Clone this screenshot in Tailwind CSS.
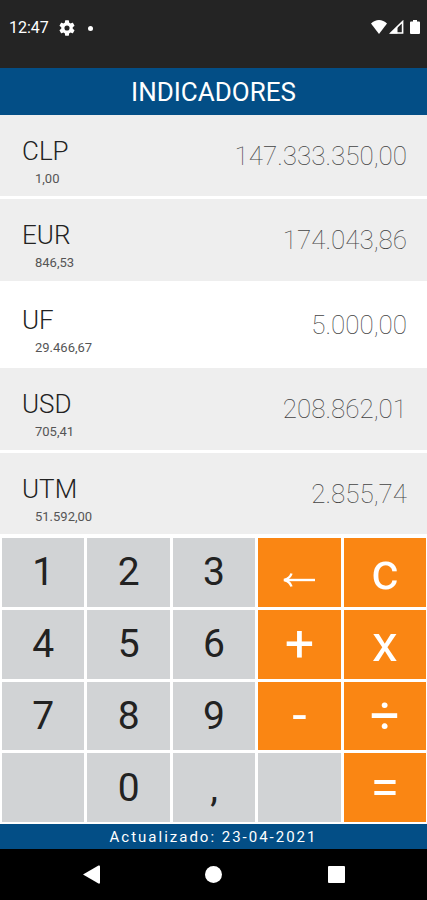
<!DOCTYPE html>
<html lang="es">
<head>
<meta charset="utf-8">
<meta name="viewport" content="width=device-width, initial-scale=1">
<title>Indicadores</title>
<script src="https://cdn.jsdelivr.net/npm/@tailwindcss/browser@4"></script>
</head>
<body class="flex h-dvh min-h-[720px] flex-col bg-white font-[Roboto,sans-serif] text-[#222]">
  <div class="flex h-[68px] shrink-0 items-start justify-between bg-[#242424] pt-[18px] pr-[7px] pl-[9px] text-white">
    <div class="flex h-5 items-center">
      <span class="text-base">12:47</span>
      <svg class="ml-[10px] size-4" viewBox="2 2 20 20" fill="currentColor" aria-hidden="true"><path d="M19.14 12.94c.04-.3.06-.61.06-.94s-.02-.64-.07-.94l2.03-1.58a.49.49 0 0 0 .12-.61l-1.92-3.32a.49.49 0 0 0-.59-.22l-2.39.96a7 7 0 0 0-1.62-.94l-.36-2.54a.48.48 0 0 0-.48-.41h-3.84a.48.48 0 0 0-.47.41l-.36 2.54c-.59.24-1.13.57-1.62.94l-2.39-.96a.48.48 0 0 0-.59.22L2.74 8.87a.48.48 0 0 0 .12.61l2.03 1.58c-.05.3-.09.63-.09.94s.02.64.07.94l-2.03 1.58a.49.49 0 0 0-.12.61l1.92 3.32c.12.22.37.29.59.22l2.39-.96c.5.38 1.03.7 1.62.94l.36 2.54c.05.24.24.41.48.41h3.84c.24 0 .44-.17.47-.41l.36-2.54a6.8 6.8 0 0 0 1.62-.94l2.39.96c.22.08.47 0 .59-.22l1.92-3.32a.47.47 0 0 0-.12-.61zM12 15.200a3.200 3.200 0 1 1 0-6.400 3.200 3.200 0 0 1 0 6.400z"/></svg>
      <span class="ml-[13px] size-[5px] rounded-full bg-white"></span>
    </div>
    <div class="flex h-[18px] items-center gap-[2px]">
      <svg class="h-[14px] w-4" viewBox="0 0 16 14" fill="currentColor" aria-hidden="true"><path d="M0 3.600C4.500-1.200 11.500-1.200 16 3.600L8 14z"/></svg>
      <svg class="h-[14px] w-[15px]" viewBox="0 0 15 14" aria-hidden="true"><path d="M1.800 13 13.600 1.600V13z" fill="none" stroke="#fff" stroke-width="1.600"/><path d="M1 13.600 8.500 6.300v7.300z" fill="#fff"/></svg>
      <svg class="ml-1 h-[14px] w-[10px]" viewBox="0 0 10 14" fill="currentColor" aria-hidden="true"><path d="M3 0h4v1.500h2q1 0 1 1V13q0 1-1 1H1q-1 0-1-1V2.500q0-1 1-1h2z"/></svg>
    </div>
  </div>

  <header class="flex h-[47px] shrink-0 items-center justify-center bg-[#034e86] text-white">
    <h1 class="text-[26px] leading-8">INDICADORES</h1>
  </header>

  <ul class="flex flex-[419_1_0%] flex-col gap-[3px] pb-[2px]">
    <li class="flex flex-1"><button class="flex flex-1 items-start justify-between bg-[#eee] pt-5 pr-5 pl-[22px] text-left">
      <span><span class="block text-[26px] leading-8 font-light">CLP</span><span class="block pl-[13px] text-[13px] leading-6 text-[#555]">1,00</span></span>
      <span class="pt-[5px] text-[26px] leading-8 font-thin text-[#444]">147.333.350,00</span></button></li>
    <li class="flex flex-1"><button class="flex flex-1 items-start justify-between bg-[#eee] pt-5 pr-5 pl-[22px] text-left">
      <span><span class="block text-[26px] leading-8 font-light">EUR</span><span class="block pl-[13px] text-[13px] leading-6 text-[#555]">846,53</span></span>
      <span class="pt-[5px] text-[26px] leading-8 font-thin text-[#444]">174.043,86</span></button></li>
    <li class="flex flex-1"><button aria-pressed="true" class="flex flex-1 items-start justify-between bg-white pt-5 pr-5 pl-[22px] text-left">
      <span><span class="block text-[26px] leading-8 font-light">UF</span><span class="block pl-[13px] text-[13px] leading-6 text-[#555]">29.466,67</span></span>
      <span class="pt-[5px] text-[26px] leading-8 font-thin text-[#444]">5.000,00</span></button></li>
    <li class="flex flex-1"><button class="flex flex-1 items-start justify-between bg-[#eee] pt-5 pr-5 pl-[22px] text-left">
      <span><span class="block text-[26px] leading-8 font-light">USD</span><span class="block pl-[13px] text-[13px] leading-6 text-[#555]">705,41</span></span>
      <span class="pt-[5px] text-[26px] leading-8 font-thin text-[#444]">208.862,01</span></button></li>
    <li class="flex flex-1"><button class="flex flex-1 items-start justify-between bg-[#eee] pt-5 pr-5 pl-[22px] text-left">
      <span><span class="block text-[26px] leading-8 font-light">UTM</span><span class="block pl-[13px] text-[13px] leading-6 text-[#555]">51.592,00</span></span>
      <span class="pt-[5px] text-[26px] leading-8 font-thin text-[#444]">2.855,74</span></button></li>
  </ul>

  <div class="grid flex-[284_1_0%] grid-cols-5 grid-rows-4 gap-[3px] pt-[2px] pr-px pb-[2px] pl-[2px] text-[39px] leading-[46px]">
    <button class="bg-[#d1d3d5]">1</button>
    <button class="bg-[#d1d3d5]">2</button>
    <button class="bg-[#d1d3d5]">3</button>
    <button aria-label="Borrar" class="flex items-center justify-center bg-[#fa8613] pt-4 text-white"><svg class="h-4 w-8" viewBox="0 0 32 16" fill="none" stroke="currentColor" stroke-width="2.400" aria-hidden="true"><path d="M2 8h30"/><path d="M8.500 1.500Q7 6.500 1 8q6 1.500 7.500 6.500"/></svg></button>
    <button class="bg-[#fa8613] text-[52px] leading-[46px] text-white">c</button>
    <button class="bg-[#d1d3d5]">4</button>
    <button class="bg-[#d1d3d5]">5</button>
    <button class="bg-[#d1d3d5]">6</button>
    <button class="bg-[#fa8613] text-[52px] leading-[46px] text-white">+</button>
    <button class="bg-[#fa8613] text-[52px] leading-[46px] text-white">x</button>
    <button class="bg-[#d1d3d5]">7</button>
    <button class="bg-[#d1d3d5]">8</button>
    <button class="bg-[#d1d3d5]">9</button>
    <button class="bg-[#fa8613] text-[52px] leading-[46px] text-white">-</button>
    <button class="bg-[#fa8613] text-[52px] leading-[46px] text-white">÷</button>
    <button class="bg-[#d1d3d5]" disabled aria-label="Vacío"></button>
    <button class="bg-[#d1d3d5]">0</button>
    <button class="bg-[#d1d3d5]">,</button>
    <button class="bg-[#d1d3d5]" disabled aria-label="Vacío"></button>
    <button class="bg-[#fa8613] text-[52px] leading-[46px] text-white">=</button>
  </div>

  <footer class="flex h-[25px] shrink-0 items-center justify-center bg-[#034e86] pt-[2px] text-[15px] tracking-[2px] text-white">Actualizado: 23-04-2021</footer>

  <nav class="grid h-[51px] shrink-0 grid-cols-[1fr_68px_1fr] items-center bg-black text-white">
    <button aria-label="Atrás" class="mr-20 justify-self-end"><svg class="block h-[19px] w-[17px]" viewBox="0 0 17 19" fill="currentColor" aria-hidden="true"><path d="M0 9.500 15.500.5Q17 0 17 1.500v16q0 1.500-1.500 1z"/></svg></button>
    <button aria-label="Inicio" class="justify-self-center"><span class="block size-[17px] rounded-full bg-white"></span></button>
    <button aria-label="Recientes" class="ml-20 justify-self-start"><span class="block size-[17px] rounded-[1px] bg-white"></span></button>
  </nav>
</body>
</html>
